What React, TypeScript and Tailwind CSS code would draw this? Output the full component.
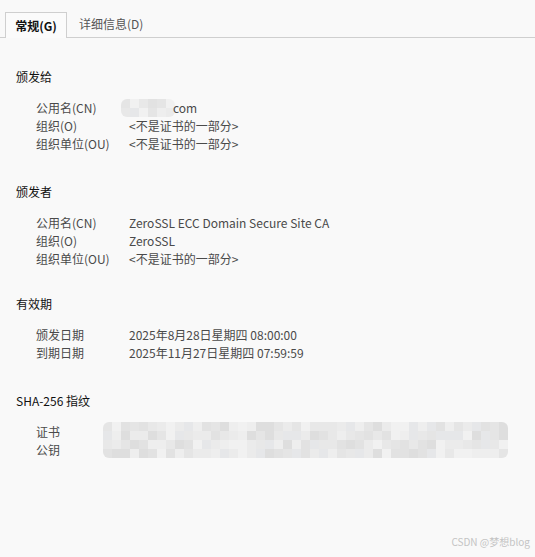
import React from "react";

/* ── Mosaic (blurred-out text) ─────────────────────────────── */
const shades = [
  "bg-[#e8e8e8]",
  "bg-[#e2e2e2]",
  "bg-[#eeeeee]",
  "bg-[#e5e5e5]",
  "bg-[#f1f1f1]",
  "bg-[#dedede]",
  "bg-[#ebebeb]",
  "bg-[#e6e7e9]",
];

function Mosaic({ rows, cols, seed }: { rows: number; cols: number; seed: number }) {
  const cells: number[] = [];
  let s = seed;
  for (let i = 0; i < rows * cols; i++) {
    s = (s * 9301 + 49297) % 233280;
    cells.push(Math.floor((s / 233280) * shades.length));
  }
  return (
    <div className="overflow-hidden rounded-[6px]">
      {Array.from({ length: rows }).map((_, r) => (
        <div key={r} className="flex">
          {Array.from({ length: cols }).map((_, c) => (
            <div key={c} className={`h-[9px] w-[9px] ${shades[cells[r * cols + c]]}`} />
          ))}
        </div>
      ))}
    </div>
  );
}

/* ── Data ──────────────────────────────────────────────────── */
const notPart = "<不是证书的一部分>";

const issuedTo = [
  { label: "公用名(CN)", value: null },
  { label: "组织(O)", value: notPart },
  { label: "组织单位(OU)", value: notPart },
];

const issuedBy = [
  { label: "公用名(CN)", value: "ZeroSSL ECC Domain Secure Site CA" },
  { label: "组织(O)", value: "ZeroSSL" },
  { label: "组织单位(OU)", value: notPart },
];

const validity = [
  { label: "颁发日期", value: "2025年8月28日星期四 08:00:00" },
  { label: "到期日期", value: "2025年11月27日星期四 07:59:59" },
];

function Row({ label, children }: { label: string; children: React.ReactNode }) {
  return (
    <div className="flex h-[18px] items-center pl-[36px]">
      <div className="w-[93px] shrink-0">{label}</div>
      <div className="flex items-center">{children}</div>
    </div>
  );
}

function Heading({ children }: { children: React.ReactNode }) {
  return <h2 className="mb-[13px] h-[18px] pl-[16px] leading-[18px] text-[#111]">{children}</h2>;
}

/* ── Page ──────────────────────────────────────────────────── */
export default function App() {
  return (
    <div
      className="relative h-[557px] w-[535px] overflow-hidden bg-[#f9f9f9] text-[12px] leading-[18px] text-[#4a4a4a]"
      style={{ fontFamily: '"Noto Sans CJK SC", "Noto Sans", sans-serif' }}
    >
      {/* Tabs */}
      <div className="flex h-[38px] items-end border-b border-[#cfcfcf] pl-[5px]">
        <div className="-mb-px flex h-[26px] w-[62px] items-center justify-center border border-b-0 border-[#cfcfcf] bg-[#fbfbfb] font-bold text-[#111]">
          常规(G)
        </div>
        <div className="flex h-[26px] items-center pl-[12px] text-[#555]">详细信息(D)</div>
      </div>

      <div className="pt-[30px]">
        <section className="mb-[30px]">
          <Heading>颁发给</Heading>
          {issuedTo.map((r) => (
            <Row key={r.label} label={r.label}>
              {r.value ?? (
                <span className="-ml-[8px] flex items-center">
                  <Mosaic rows={2} cols={6} seed={7} />
                  <span className="-ml-[2px]">com</span>
                </span>
              )}
            </Row>
          ))}
        </section>

        <section className="mb-[27px]">
          <Heading>颁发者</Heading>
          {issuedBy.map((r) => (
            <Row key={r.label} label={r.label}>
              {r.value}
            </Row>
          ))}
        </section>

        <section className="mb-[30px]">
          <Heading>有效期</Heading>
          {validity.map((r) => (
            <Row key={r.label} label={r.label}>
              {r.value}
            </Row>
          ))}
        </section>

        <section>
          <Heading>SHA-256 指纹</Heading>
          <div className="flex pl-[36px]">
            <div className="w-[67px] shrink-0">
              <div className="h-[18px]">证书</div>
              <div className="h-[18px]">公钥</div>
            </div>
            <div className="-mt-[1px]">
              <Mosaic rows={4} cols={45} seed={31} />
            </div>
          </div>
        </section>
      </div>

      {/* Watermark */}
      <div className="absolute bottom-[6px] right-[5px] text-[10px] text-[#c4c4c4]">CSDN @梦想blog</div>
    </div>
  );
}
